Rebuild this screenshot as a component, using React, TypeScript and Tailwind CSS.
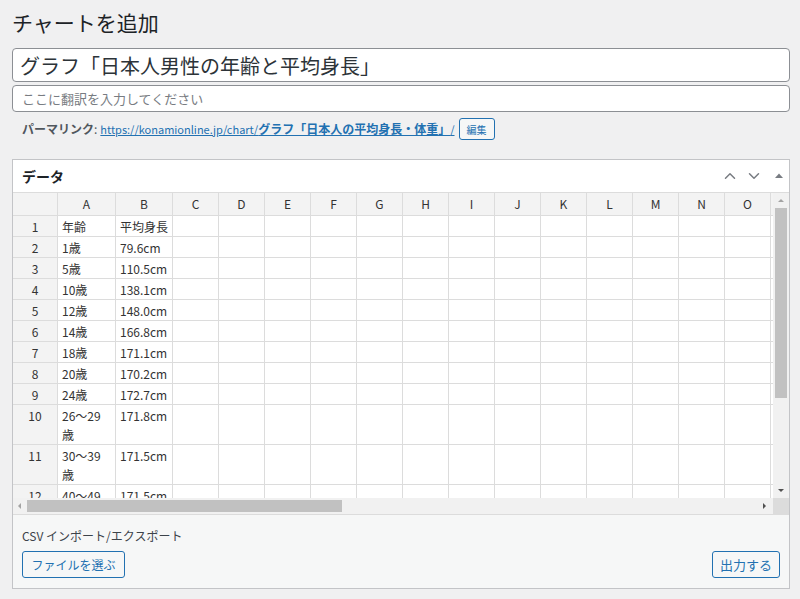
import React from 'react';
import { ChevronUp, ChevronDown } from 'lucide-react';

const rows: [string, string, string][] = [
  ['1', '年齢', '平均身長'],
  ['2', '1歳', '79.6cm'],
  ['3', '5歳', '110.5cm'],
  ['4', '10歳', '138.1cm'],
  ['5', '12歳', '148.0cm'],
  ['6', '14歳', '166.8cm'],
  ['7', '18歳', '171.1cm'],
  ['8', '20歳', '170.2cm'],
  ['9', '24歳', '172.7cm'],
  ['10', '26〜29歳', '171.8cm'],
  ['11', '30〜39歳', '171.5cm'],
  ['12', '40〜49歳', '171.5cm'],
];

const emptyCols = ['C', 'D', 'E', 'F', 'G', 'H', 'I', 'J', 'K', 'L', 'M', 'N', 'O', ''];

const cell = 'border-r border-b border-[#dcdcdc] pl-[4px] pr-[6px] pt-[1px] leading-[19px] align-top text-left font-normal';
const cellB = 'border-r border-b border-[#dcdcdc] pl-[4px] pr-0 pt-[1px] leading-[19px] align-top text-left font-normal';
const head = 'border-r border-b border-[#dcdcdc] bg-[#f3f3f3] leading-[22px] text-center font-normal';

const App: React.FC = () => {
  return (
    <div className="min-h-[599px] bg-[#f0f0f1] pl-[12px] pr-[10px] pt-[8px] font-['Noto_Sans_CJK_JP','Noto_Sans',sans-serif] text-[#3c434a]">
      {/* Title */}
      <h1 className="text-[21px] leading-[28px] text-[#1d2327]">チャートを追加</h1>

      <input
        readOnly
        value="グラフ「日本人男性の年齢と平均身長」"
        className="mt-[12px] block h-[34px] w-full rounded-[4px] border border-[#8c8f94] bg-white px-[7px] text-[20px] text-[#2c3338] outline-none"
      />
      <input
        readOnly
        placeholder="ここに翻訳を入力してください"
        className="mt-[3px] block h-[27px] w-full rounded-[4px] border border-[#8c8f94] bg-white px-[9px] text-[13px] text-[#2c3338] placeholder-[#787c82] outline-none"
      />

      {/* Permalink */}
      <div className="mt-[6px] flex h-[22px] items-center pl-[10px] text-[12px]">
        <span className="font-bold text-[#50575e]">パーマリンク</span>
        <span className="mr-[3px] text-[#50575e]">:</span>
        <a className="text-[11px] text-[#2271b1] underline">
          https://konamionline.jp/chart/<span className="text-[12px] font-bold">グラフ「日本人の平均身長・体重」</span>/
        </a>
        <button className="ml-[4px] h-[22px] w-[36px] rounded-[3px] border border-[#2271b1] bg-[#f6f7f7] text-[10px] text-[#2271b1]">
          編集
        </button>
      </div>

      {/* Data panel */}
      <div className="mt-[19px] border border-[#c3c4c7] bg-white">
        <div className="flex h-[33px] items-center justify-between border-b border-[#dcdcdc] pl-[9px] pr-[2px]">
          <h2 className="text-[14px] font-bold text-[#1d2327]">データ</h2>
          <div className="flex items-center gap-[6px] text-[#787c82]">
            <ChevronUp size={18} strokeWidth={2} />
            <ChevronDown size={18} strokeWidth={2} />
            <svg width="16" height="16" viewBox="0 0 16 16" className="ml-[2px]">
              <path d="M4 10 L8 5.5 L12 10 Z" fill="#787c82" />
            </svg>
          </div>
        </div>

        <div className="flex h-[305px]">
          <div className="w-[760px] overflow-hidden">
            <table className="w-[804px] table-fixed border-separate border-spacing-0 text-[12px] text-[#333]">
              <colgroup>
                <col className="w-[45px]" />
                <col className="w-[58px]" />
                <col className="w-[57px]" />
                {emptyCols.map((c, i) => (
                  <col key={i} className="w-[46px]" />
                ))}
              </colgroup>
              <thead>
                <tr>
                  <th className={head}></th>
                  <th className={head}>A</th>
                  <th className={head}>B</th>
                  {emptyCols.map((c, i) => (
                    <th key={i} className={head}>
                      {c}
                    </th>
                  ))}
                </tr>
              </thead>
              <tbody>
                {rows.map(([n, a, b]) => (
                  <tr key={n}>
                    <td className="border-r border-b border-[#dcdcdc] bg-[#f3f3f3] pt-[1px] text-center align-top leading-[19px]">
                      {n}
                    </td>
                    <td className={cell}>{a}</td>
                    <td className={cellB}>{b}</td>
                    {emptyCols.map((c, i) => (
                      <td key={i} className={cell}></td>
                    ))}
                  </tr>
                ))}
              </tbody>
            </table>
          </div>

          {/* vertical scrollbar */}
          <div className="flex w-[16px] flex-col items-center bg-[#f1f1f1]">
            <svg width="16" height="15" viewBox="0 0 16 15">
              <path d="M5 9 L8 6 L11 9 Z" fill="#a3a3a3" />
            </svg>
            <div className="h-[190px] w-[12px] bg-[#c1c1c1]" />
            <div className="flex-1" />
            <svg width="16" height="15" viewBox="0 0 16 15">
              <path d="M5 6 L8 9 L11 6 Z" fill="#505050" />
            </svg>
          </div>
        </div>

        {/* horizontal scrollbar */}
        <div className="flex h-[16px] items-center bg-[#f1f1f1]">
          <svg width="14" height="16" viewBox="0 0 14 16">
            <path d="M8 5 L5 8 L8 11 Z" fill="#a3a3a3" />
          </svg>
          <div className="h-[12px] w-[315px] bg-[#c1c1c1]" />
          <div className="flex-1" />
          <svg width="16" height="16" viewBox="0 0 16 16">
            <path d="M6 5 L9 8 L6 11 Z" fill="#505050" />
          </svg>
          <div className="h-[16px] w-[16px] bg-[#dcdcdc]" />
        </div>

        {/* CSV import / export */}
        <div className="border-t border-[#dcdcdc] bg-[#f6f7f7] px-[9px] pt-[12px] pb-[10px]">
          <p className="text-[12px] leading-[18px] text-[#3c434a]">CSV インポート/エクスポート</p>
          <div className="mt-[6px] flex items-center justify-between">
            <button className="h-[27px] w-[103px] rounded-[3px] border border-[#2271b1] bg-[#f6f7f7] text-[12px] text-[#2271b1]">
              ファイルを選ぶ
            </button>
            <button className="h-[27px] w-[68px] rounded-[3px] border border-[#2271b1] bg-[#f6f7f7] text-[13px] text-[#2271b1]">
              出力する
            </button>
          </div>
        </div>
      </div>
    </div>
  );
};

export default App;
